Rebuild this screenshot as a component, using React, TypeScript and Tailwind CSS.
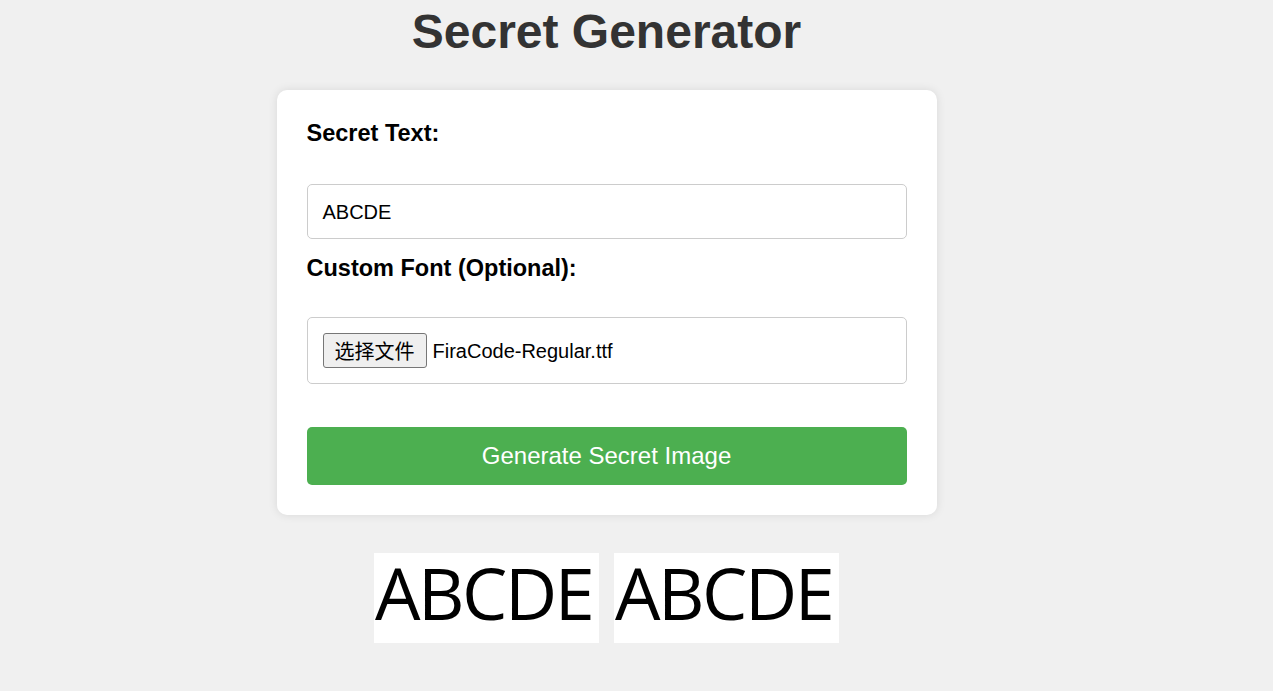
const fieldFont = { fontFamily: '"Liberation Sans", Arial, sans-serif' };

const SecretImage = ({ text }: { text: string }) => {
  return (
    <div className="w-[225px] h-[90px] bg-white pl-[1px]">
      <span className="block text-[72px] leading-[78px] tracking-[-2.5px] text-black font-['Open_Sans',sans-serif] whitespace-nowrap">
        {text}
      </span>
    </div>
  );
};

const App = () => {
  const secretText = "ABCDE";
  const fileName = "FiraCode-Regular.ttf";

  return (
    <div
      className="min-h-[691px] w-full bg-[#f0f0f0] font-['Liberation_Sans',Arial,sans-serif]"
      style={fieldFont}
    >
      <div className="w-[1213px] flex flex-col items-center pt-[4px]">
        <h1 className="text-[48px] leading-[55px] font-bold text-[#333333]">
          Secret Generator
        </h1>

        <div className="mt-[31px] w-[660px] bg-white rounded-[10px] p-[30px] shadow-[0_0_10px_rgba(0,0,0,0.1)]">
          <label className="block text-[23.5px] leading-[27px] font-bold text-black mb-[37px]">
            Secret Text:
          </label>
          <div className="w-full h-[55px] border border-[#cccccc] rounded-[5px] px-[15px] flex items-center text-[20px] text-black">
            {secretText}
          </div>

          <label className="block mt-[16px] text-[23.5px] leading-[27px] font-bold text-black mb-[35px]">
            Custom Font (Optional):
          </label>
          <div className="w-full h-[67px] border border-[#cccccc] rounded-[5px] px-[15px] flex items-center text-[20px] text-black">
            <span className="h-[35px] w-[104px] flex items-center justify-center bg-[#efefef] border border-[#767676] rounded-[3px] text-[20px] font-['Noto_Sans_CJK_SC',sans-serif]">
              选择文件
            </span>
            <span className="ml-[6px]">{fileName}</span>
          </div>

          <button className="mt-[43px] w-full h-[58px] bg-[#4caf50] rounded-[5px] text-white text-[24px] flex items-center justify-center">
            Generate Secret Image
          </button>
        </div>

        <div className="mt-[38px] flex gap-[15px]">
          <SecretImage text={secretText} />
          <SecretImage text={secretText} />
        </div>
      </div>
    </div>
  );
};

export default App;
